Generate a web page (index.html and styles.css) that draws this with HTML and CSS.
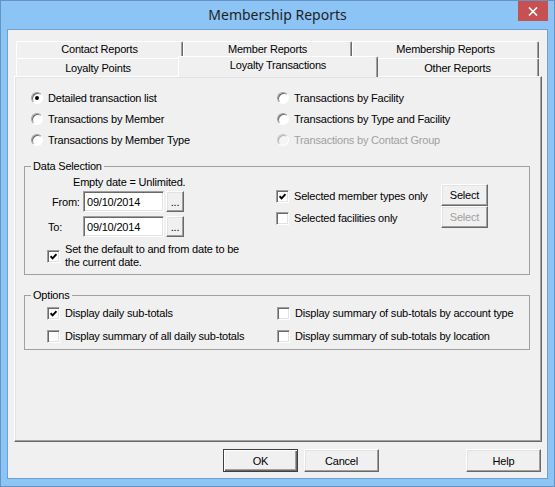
FILE: index.html
```html
<!DOCTYPE html>
<html lang="en">
<head>
<meta charset="UTF-8">
<title>Membership Reports</title>
<link rel="stylesheet" href="styles.css">
</head>
<body>

<div class="window">
  <div class="titlebar">
    <div class="title">Membership Reports</div>
    <button class="close-btn" title="Close">
      <svg width="10" height="9" viewBox="0 0 10 9"><path d="M1 0.5 L9 8.5 M9 0.5 L1 8.5" stroke="#fff" stroke-width="1.7" fill="none"/></svg>
    </button>
  </div>

  <div class="client">
    <!-- tab strip: the row holding the selected tab sits next to the panel -->
    <div class="tabs">
      <div class="tab-row tab-row-back">
        <div class="tab tab-contact">Contact Reports</div>
        <div class="tab tab-member">Member Reports</div>
        <div class="tab tab-membership">Membership Reports</div>
      </div>
      <div class="tab-row tab-row-front">
        <div class="tab tab-points">Loyalty Points</div>
        <div class="tab tab-transactions active">Loyalty Transactions</div>
        <div class="tab tab-other">Other Reports</div>
      </div>
    </div>

    <div class="panel">
      <div class="report-types">
        <label class="radio-item"><span class="radio checked"></span>Detailed transaction list</label>
        <label class="radio-item"><span class="radio"></span>Transactions by Facility</label>
        <label class="radio-item"><span class="radio"></span>Transactions by Member</label>
        <label class="radio-item"><span class="radio"></span>Transactions by Type and Facility</label>
        <label class="radio-item"><span class="radio"></span>Transactions by Member Type</label>
        <label class="radio-item disabled"><span class="radio"></span>Transactions by Contact Group</label>
      </div>

      <fieldset class="group data-selection">
        <legend>Data Selection</legend>
        <div class="data-cols">
          <div class="date-col">
            <div class="empty-note">Empty date = Unlimited.</div>
            <div class="date-grid">
              <span class="date-label from-label">From:</span>
              <input class="date-input" type="text" value="09/10/2014">
              <button class="btn pick-btn">...</button>
              <span class="date-label to-label">To:</span>
              <input class="date-input" type="text" value="09/10/2014">
              <button class="btn pick-btn">...</button>
            </div>
            <label class="check-item default-check">
              <span class="checkbox checked"><svg width="7" height="7" viewBox="0 0 7 7"><path d="M0.6 3.2 L2.6 5.3 L6.5 1.2" stroke="#000" stroke-width="1.9" fill="none"/></svg></span>
              <span>Set the default to and from date to be<br>the current date.</span>
            </label>
          </div>

          <div class="filter-col">
            <div class="filter-grid">
              <label class="check-item filter-check">
                <span class="checkbox checked"><svg width="7" height="7" viewBox="0 0 7 7"><path d="M0.6 3.2 L2.6 5.3 L6.5 1.2" stroke="#000" stroke-width="1.9" fill="none"/></svg></span>
                Selected member types only
              </label>
              <button class="btn select-btn">Select</button>
              <label class="check-item filter-check">
                <span class="checkbox"></span>
                Selected facilities only
              </label>
              <button class="btn select-btn" disabled>Select</button>
            </div>
          </div>
        </div>
      </fieldset>

      <fieldset class="group options">
        <legend>Options</legend>
        <div class="options-grid">
          <label class="check-item">
            <span class="checkbox checked"><svg width="7" height="7" viewBox="0 0 7 7"><path d="M0.6 3.2 L2.6 5.3 L6.5 1.2" stroke="#000" stroke-width="1.9" fill="none"/></svg></span>
            Display daily sub-totals
          </label>
          <label class="check-item"><span class="checkbox"></span>Display summary of sub-totals by account type</label>
          <label class="check-item"><span class="checkbox"></span>Display summary of all daily sub-totals</label>
          <label class="check-item"><span class="checkbox"></span>Display summary of sub-totals by location</label>
        </div>
      </fieldset>
    </div>

    <div class="dialog-buttons">
      <button class="btn btn-default">OK</button>
      <button class="btn btn-cancel">Cancel</button>
      <button class="btn btn-help">Help</button>
    </div>
  </div>
</div>

</body>
</html>
```

FILE: styles.css
```css
* {
  box-sizing: border-box;
}
body {
  margin: 0;
  font-family: "Liberation Sans", Arial, sans-serif;
  font-size: 11px;
  letter-spacing: -0.2px;
  color: #000;
}
.window {
  width: 555px;
  height: 487px;
  background-color: #8bc4f5;
  border: 1px solid #6593c6;
  padding: 0 6px 7px;
  display: flex;
  flex-direction: column;
}
.titlebar {
  height: 28px;
  display: grid;
  grid-template-columns: 1fr auto 1fr;
}
.title {
  grid-column: 2;
  font-family: "Noto Sans", sans-serif;
  font-size: 14px;
  letter-spacing: 0;
  line-height: 28px;
  color: #1f1f1f;
}
.close-btn {
  grid-column: 3;
  justify-self: end;
  width: 30px;
  height: 20px;
  padding: 0;
  border: none;
  background-color: #c75050;
  display: flex;
  align-items: center;
  justify-content: center;
}
.client {
  flex: 1;
  background-color: #f0f0f0;
  border: 1px solid #6d9fd3;
  display: flex;
  flex-direction: column;
}

/* tabs */
.tabs {
  margin: 11px 0 0 8px;
}
.tab-row {
  display: flex;
}
.tab {
  background-color: #f0f0f0;
  border-top: 1px solid #fff;
  border-left: 1px solid #fff;
  border-right: 1px solid #696969;
  box-shadow: inset -1px 0 #a0a0a0;
  border-radius: 2px 2px 0 0;
  text-align: center;
  white-space: nowrap;
}
.tab-row-back .tab {
  height: 17px;
  line-height: 15px;
}
.tab-row-front .tab {
  height: 18px;
  line-height: 16px;
  padding-top: 1px;
}
.tab-row-front .tab.active {
  position: relative;
  z-index: 1;
  height: 21px;
  margin: -2px -2px -1px;
  padding-top: 0;
}
.tab-contact { width: 167px; }
.tab-member { width: 169px; }
.tab-membership { width: 187px; }
.tab-points { width: 164px; }
.tab-transactions { width: 200px; }
.tab-other { width: 163px; }

.panel {
  flex: 1;
  margin: 0 5px 0 6px;
  border: 1px solid;
  border-color: #fff #696969 #696969 #fff;
  box-shadow: inset -1px -1px #a0a0a0, inset 1px 1px #e3e3e3;
  padding: 10px 11px 0 9px;
}

/* radios */
.report-types {
  display: grid;
  grid-template-columns: 246px auto;
  grid-auto-rows: 21px;
  align-items: center;
  padding-left: 7px;
}
.radio-item {
  display: flex;
  align-items: center;
  gap: 5px;
  white-space: nowrap;
}
.radio {
  width: 12px;
  height: 12px;
  flex: none;
  border-radius: 50%;
  border: 1px solid;
  border-color: #a0a0a0 #fff #fff #a0a0a0;
  box-shadow: inset 1px 1px #696969;
  background-color: #fff;
  display: flex;
  align-items: center;
  justify-content: center;
}
.radio.checked::after {
  content: "";
  width: 4px;
  height: 4px;
  border-radius: 50%;
  background-color: #000;
}
.radio-item.disabled {
  color: #a0a0a0;
}
.radio-item.disabled .radio {
  background-color: #f4f4f4;
  border-color: #c8c8c8 #fff #fff #c8c8c8;
  box-shadow: inset 1px 1px #b4b4b4;
}

/* group boxes */
.group {
  margin: 0;
  padding: 0;
  border: 1px solid #a0a0a0;
  min-width: 0;
}
.group legend {
  margin-left: 6px;
  padding: 0 2px;
  line-height: 13px;
}
.data-selection {
  margin-top: 10px;
}
.data-cols {
  display: flex;
}
.date-col {
  width: 251px;
  padding: 3px 0 5px;
}
.empty-note {
  margin-left: 48px;
  line-height: 13px;
}
.date-grid {
  display: grid;
  grid-template-columns: 58px 81px 20px;
  grid-auto-rows: 21px;
  row-gap: 4px;
  align-items: center;
  margin-top: 2px;
}
.from-label {
  padding-left: 27px;
}
.to-label {
  padding-left: 23px;
}
.date-input {
  height: 21px;
  width: 81px;
  font: inherit;
  letter-spacing: inherit;
  padding: 0 3px;
  border: 1px solid;
  border-color: #a0a0a0 #fff #fff #a0a0a0;
  box-shadow: inset 1px 1px #696969, inset -1px -1px #e3e3e3;
  background-color: #fff;
  outline: none;
}
.pick-btn {
  width: 18px;
  height: 21px;
  margin-left: 2px;
  line-height: 26px;
}
.check-item {
  display: flex;
  align-items: center;
  gap: 5px;
  white-space: nowrap;
}
.checkbox {
  width: 13px;
  height: 13px;
  flex: none;
  background-color: #fff;
  border: 1px solid;
  border-color: #a0a0a0 #fff #fff #a0a0a0;
  box-shadow: inset 1px 1px #696969, inset -1px -1px #e3e3e3;
  display: flex;
  align-items: center;
  justify-content: center;
}
.default-check {
  margin: 6px 0 0 22px;
  line-height: 13px;
}
.filter-col {
  padding-top: 11px;
}
.filter-grid {
  display: grid;
  grid-template-columns: 165px 47px;
  grid-auto-rows: 22px;
}
.filter-check {
  padding-top: 2px;
}
.select-btn {
  height: 22px;
}
.options {
  margin-top: 14px;
}
.options-grid {
  display: grid;
  grid-template-columns: 230px auto;
  grid-auto-rows: 22px;
  row-gap: 1px;
  align-items: center;
  padding: 0 0 2px 22px;
}

/* buttons */
.btn {
  font: inherit;
  letter-spacing: inherit;
  color: #000;
  padding: 0;
  background-color: #f0f0f0;
  border: 1px solid;
  border-color: #fff #696969 #696969 #fff;
  box-shadow: inset -1px -1px #a0a0a0, inset 1px 1px #e3e3e3;
}
.btn:disabled {
  color: #a0a0a0;
}
.dialog-buttons {
  display: flex;
  margin: 7px 6px 6px 215px;
}
.dialog-buttons .btn {
  width: 75px;
  height: 23px;
}
.btn-default {
  border-color: #404040;
  box-shadow: inset 1px 1px #fff, inset -1px -1px #696969, inset -2px -2px #a0a0a0;
}
.btn-cancel {
  margin-left: 6px;
}
.btn-help {
  margin-left: auto;
}
```
